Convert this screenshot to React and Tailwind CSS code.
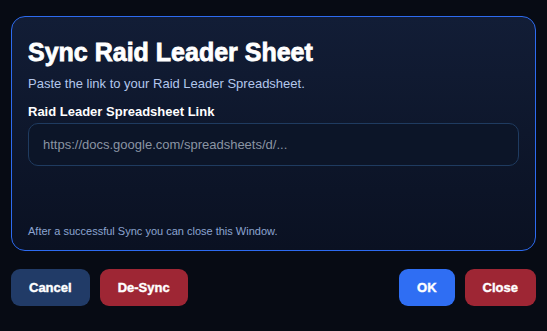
export default function App() {
  return (
    <div className="min-h-screen bg-[#070b14] pt-4 px-[11px] font-['Liberation_Sans',Arial,sans-serif]">
      {/* Panel */}
      <div className="rounded-[14px] border border-[#2d6bf0] bg-gradient-to-b from-[#121d36] to-[#0a1122] px-4 pt-5 pb-[11px]">
        <h1 className="text-[25px] leading-[30px] font-bold text-white [-webkit-text-stroke:0.8px_#ffffff]">
          Sync Raid Leader Sheet
        </h1>
        <p className="mt-[8px] text-[13px] leading-[18px] text-[#b3c7ec]">
          Paste the link to your Raid Leader Spreadsheet.
        </p>
        <label className="mt-[10px] block text-[13px] leading-[18px] font-bold text-white">
          Raid Leader Spreadsheet Link
        </label>
        <input
          type="text"
          placeholder="https://docs.google.com/spreadsheets/d/..."
          className="mt-[2px] block h-[43px] w-full rounded-[10px] border border-[#1f3b60] bg-[#0c1528] px-[14px] text-[13px] text-white placeholder:text-[#8a94a3] outline-none"
        />
        <p className="mt-[57px] text-[11px] leading-[16px] text-[#8ba4d1]">
          After a successful Sync you can close this Window.
        </p>
      </div>

      {/* Buttons */}
      <div className="mt-[18px] flex items-center justify-between">
        <div className="flex gap-[10px]">
          <button className="h-[37px] rounded-[9px] bg-[#213b67] px-[18px] text-[13px] font-bold text-white [-webkit-text-stroke:0.4px_#ffffff]">
            Cancel
          </button>
          <button className="h-[37px] rounded-[9px] bg-[#9e2634] px-[18px] text-[13px] font-bold text-white [-webkit-text-stroke:0.4px_#ffffff]">
            De-Sync
          </button>
        </div>
        <div className="flex gap-[10px]">
          <button className="h-[37px] rounded-[9px] bg-[#2f6ef3] px-[18px] text-[13px] font-bold text-white [-webkit-text-stroke:0.4px_#ffffff]">
            OK
          </button>
          <button className="h-[37px] rounded-[9px] bg-[#9e2634] px-[18px] text-[13px] font-bold text-white [-webkit-text-stroke:0.4px_#ffffff]">
            Close
          </button>
        </div>
      </div>
    </div>
  );
}
